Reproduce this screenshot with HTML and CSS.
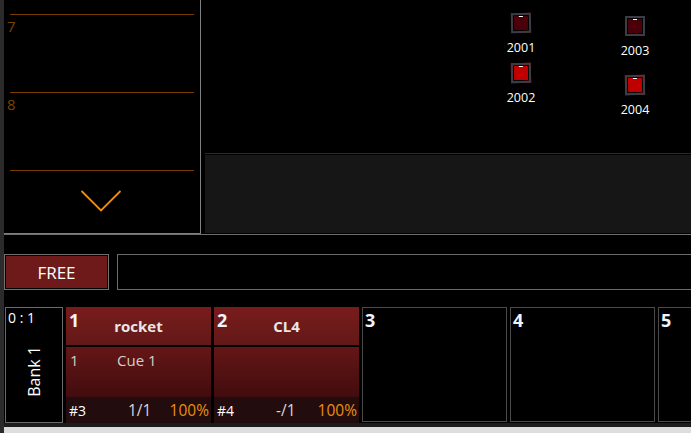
FILE: index.html
```html
<!DOCTYPE html>
<html lang="en">
<head>
    <meta charset="UTF-8">
    <title>Playback</title>
    <link rel="stylesheet" href="styles.css">
</head>
<body>
    <div class="app">
        <div class="top">
            <!-- Cue list -->
            <div class="cue-list">
                <div class="cue-row"><span>7</span></div>
                <div class="cue-row"><span>8</span></div>
                <div class="cue-end"></div>
                <svg class="chevron" width="42" height="24" viewBox="0 0 42 24">
                    <path d="M1.5 2 L21 21.5 L40.5 2" fill="none" stroke="#f28c0f" stroke-width="1.8"/>
                </svg>
            </div>

            <div class="stage">
                <div class="canvas">
                    <div class="fixture f1"><div class="lamp dim skew"><i></i></div><span>2001</span></div>
                    <div class="fixture f2"><div class="lamp skew"><i></i></div><span>2002</span></div>
                    <div class="fixture f3"><div class="lamp dim"><i></i></div><span>2003</span></div>
                    <div class="fixture f4"><div class="lamp skew"><i></i></div><span>2004</span></div>
                </div>
                <div class="dark-panel"></div>
            </div>
        </div>

        <div class="command-row">
            <button class="free-btn">FREE</button>
            <div class="command-box"></div>
        </div>

        <div class="bank-row">
            <div class="bank">
                <div class="bank-page">0 : 1</div>
                <div class="bank-name">Bank 1</div>
            </div>

            <div class="card active">
                <div class="card-head"><b class="num">1</b><b class="title">rocket</b></div>
                <div class="card-body"><span class="cue-num">1</span><span class="cue-name">Cue 1</span></div>
                <div class="card-foot"><span class="id">#3</span><span class="count">1/1</span><span class="pct">100%</span></div>
            </div>

            <div class="card active">
                <div class="card-head"><b class="num">2</b><b class="title">CL4</b></div>
                <div class="card-body"></div>
                <div class="card-foot"><span class="id">#4</span><span class="count">-/1</span><span class="pct">100%</span></div>
            </div>

            <div class="card empty"><b class="num">3</b></div>
            <div class="card empty"><b class="num">4</b></div>
            <div class="card empty"><b class="num">5</b></div>
        </div>

        <div class="statusbar"></div>
    </div>
</body>
</html>
```

FILE: styles.css
```css
* {
    box-sizing: border-box;
}

html,
body {
    margin: 0;
    height: 433px;
    overflow: hidden;
    background-color: #000000;
}

.app {
    width: 691px;
    height: 433px;
    display: flex;
    flex-direction: column;
    font-family: "Open Sans", "Noto Sans", sans-serif;
    color: #ffffff;
    border-left: 4px solid #2b2b2b;
    overflow: hidden;
}

/* Top area */
.top {
    display: flex;
    height: 235px;
    flex-shrink: 0;
    border-bottom: 1px solid #6e6e6e;
}

.cue-list {
    width: 197px;
    flex-shrink: 0;
    border-right: 1px solid #808080;
    border-bottom: 1px solid #808080;
    padding: 14px 0 0 6px;
    position: relative;
}

.cue-row {
    height: 78px;
    margin-right: 6px;
    border-top: 1px solid #7a3d00;
}

.cue-row span {
    display: block;
    margin: 3px 0 0 -3px;
    font-size: 15px;
    line-height: 17px;
    color: #7a4300;
}

.cue-end {
    margin-right: 6px;
    border-top: 1px solid #7a3d00;
}

.chevron {
    position: absolute;
    left: 76px;
    top: 189px;
}

.stage {
    flex: 1;
    display: flex;
    flex-direction: column;
}

.canvas {
    height: 153px;
    flex-shrink: 0;
    position: relative;
}

.fixture {
    position: absolute;
    width: 40px;
    display: flex;
    flex-direction: column;
    align-items: center;
    font-size: 12.5px;
    line-height: 16px;
}

.fixture span {
    margin-top: 7px;
}

.f1 { left: 300px; top: 13px; }
.f2 { left: 300px; top: 63px; }
.f3 { left: 414px; top: 16px; }
.f4 { left: 414px; top: 75px; }

.lamp {
    width: 20px;
    height: 20px;
    border: 2px solid #3c3c46;
    background-color: #c00000;
    box-shadow: inset 0 0 0 1px #000000;
    position: relative;
}

.lamp.dim {
    background-color: #4a0008;
}

.lamp.skew {
    transform: rotate(-1deg);
}

.lamp i {
    position: absolute;
    left: 6px;
    top: 1px;
    width: 4px;
    height: 1px;
    background-color: #ffffff;
}

.dark-panel {
    flex: 1;
    margin: 0 0 1px 4px;
    border-top: 1px solid #2a2a2a;
    box-shadow: inset 0 1px 0 #000000;
    padding-top: 1px;
    background-color: #161616;
}

/* Free button and command line */
.command-row {
    display: flex;
    gap: 8px;
    margin-top: 19px;
    height: 36px;
    flex-shrink: 0;
}

.free-btn {
    width: 105px;
    padding: 0;
    background-color: #6e1a1a;
    border: 1px solid #707070;
    box-shadow: inset 0 0 0 1px #000000;
    color: #ffffff;
    font-family: inherit;
    font-size: 17px;
}

.command-box {
    flex: 1;
    margin-right: -4px;
    border: 1px solid #6a6a6a;
}

/* Playback bank */
.bank-row {
    display: flex;
    gap: 3px;
    margin: 17px 0 0 1px;
    height: 116px;
    flex-shrink: 0;
}

.bank {
    width: 58px;
    flex-shrink: 0;
    border: 1px solid #6a6a6a;
    position: relative;
}

.bank-page {
    padding: 2px 0 0 2px;
    line-height: 16px;
    font-size: 14px;
}

.bank-name {
    position: absolute;
    left: 19px;
    top: 38px;
    writing-mode: vertical-rl;
    transform: rotate(180deg);
    font-size: 16px;
    line-height: 18px;
}

.card {
    flex-shrink: 0;
    width: 145px;
}

.num {
    font-size: 18px;
    line-height: 20px;
    font-weight: 700;
    color: #f0f4ff;
}

.card.active {
    display: flex;
    flex-direction: column;
}

.card-head {
    height: 38px;
    background: linear-gradient(#781c1c, #641818);
    position: relative;
    padding: 3px 0 0 3px;
}

.title {
    position: absolute;
    left: 0;
    right: 0;
    top: 10px;
    text-align: center;
    font-size: 15px;
    line-height: 18px;
    color: #e8e8e8;
}

.card-body {
    height: 50px;
    margin-top: 2px;
    background: linear-gradient(#651616, #420c0e);
    display: flex;
    padding: 4px 0 0 4px;
    font-size: 15px;
    line-height: 18px;
    color: #d0d0d0;
}

.cue-num {
    width: 47px;
}

.card-foot {
    flex: 1;
    display: flex;
    align-items: center;
    position: relative;
    background-color: #230c0e;
    padding: 0 2px 0 3px;
    font-size: 15.5px;
}

.id {
    font-size: 14px;
}

.count {
    position: absolute;
    left: 62px;
    color: #d8d8d8;
}

.pct {
    margin-left: auto;
    color: #ea8f0c;
}

.card.empty {
    height: 115px;
    border: 1px solid #4a4a4a;
    padding: 2px 0 0 2px;
}

.statusbar {
    margin: 0 0 0 -4px;
    flex: 1;
    background: linear-gradient(#1c1c1c 0, #1c1c1c 4px, #dddddd 4px);
}
```
